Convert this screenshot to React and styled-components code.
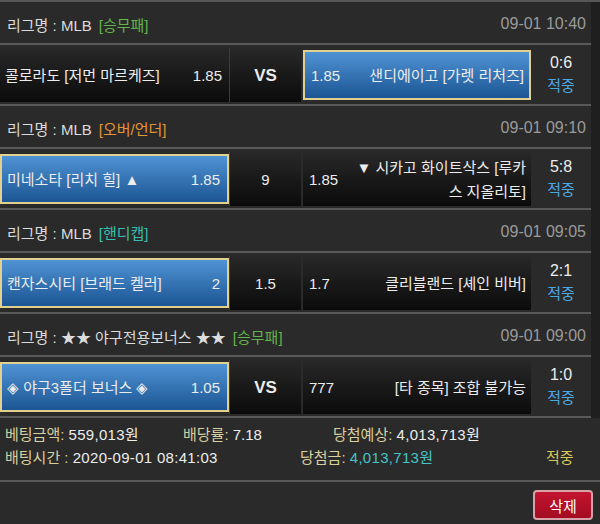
import React from 'react'
import styled, { createGlobalStyle } from 'styled-components'

const GlobalStyle = createGlobalStyle`
  body {
    margin: 0;
    background: #2a2a2a;
    font-family: "Liberation Sans", "Noto Sans CJK KR", sans-serif;
    color: #e6e6e6;
  }
`

const Page = styled.div`
  width: 600px;
  height: 524px;
  display: flex;
  flex-direction: column;
  background: #2a2a2a;
  border-top: 2px solid #575757;
  box-sizing: border-box;
`

const List = styled.div`
  display: flex;
`

const Games = styled.div`
  width: 591px;
  display: flex;
  flex-direction: column;
`

const Rail = styled.div`
  flex: 1;
  background: #1f1f1f;
`

const Header = styled.div`
  height: 38px;
  display: flex;
  align-items: center;
  justify-content: space-between;
  padding: 3px 5px 0 7px;
  font-size: 15px;
  border-bottom: 2px solid #595959;
`

const League = styled.span`
  color: #dcdcdc;
`

const Kind = styled.span`
  margin-left: 7px;
  color: ${p => p.$color};
`

const Time = styled.span`
  color: #9a9a9a;
  font-size: 16px;
`

const Row = styled.div`
  height: 61px;
  display: flex;
  align-items: stretch;
  padding: 3px 0 2px;
  box-sizing: border-box;
  border-bottom: 2px solid #595959;
`

const Cell = styled.div`
  display: flex;
  align-items: center;
  box-sizing: border-box;
  font-size: 15px;
  line-height: 24px;
  color: #ececec;
  padding-top: 2px;
  background: ${p => p.$on
    ? 'linear-gradient(#4f93d4, #1c5593)'
    : 'linear-gradient(#282828, #0b0b0b)'};
  border: ${p => p.$on ? '2px solid #e4d08e' : 'none'};
  margin: ${p => p.$on ? '2px 0' : '0'};
`

const Home = styled(Cell)`
  width: 229px;
  padding-left: 5px;
  padding-right: 7px;
  justify-content: space-between;
`

const Mid = styled(Cell)`
  width: 72px;
  justify-content: center;
  border-left: 1px solid #3d3d3d;
  font-weight: ${p => p.$bold ? 700 : 400};
  font-size: ${p => p.$bold ? '17px' : '15px'};
`

const Away = styled(Cell)`
  width: 228px;
  margin-left: 2px;
  padding-left: 6px;
  padding-right: 5px;
`

const Odds = styled.span`
  width: 44px;
  flex-shrink: 0;
`

const Name = styled.span`
  flex: 1;
  text-align: right;
  word-break: break-all;
`

const Result = styled.div`
  flex: 1;
  display: flex;
  flex-direction: column;
  align-items: center;
  justify-content: center;
  padding-bottom: 2px;
  font-size: 16px;
  line-height: 23px;
`

const Score = styled.span`
  color: #ececec;
`

const Hit = styled.span`
  color: #4ea6e4;
  font-size: 15px;
`

const Info = styled.div`
  height: 64px;
  padding: 5px 0 0 5px;
  box-sizing: border-box;
  border-bottom: 2px solid #595959;
  font-size: 15px;
  line-height: 23px;
`

const Line = styled.div`
  display: flex;
`

const Item = styled.span`
  width: ${p => p.$w ? `${p.$w}px` : 'auto'};
  flex-shrink: 0;
  color: ${p => p.$color || '#ececec'};
`

const Label = styled.span`
  color: #d8cf9e;
`

const Value = styled.span`
  color: ${p => p.$color || '#ececec'};
  letter-spacing: ${p => p.$wide ? '0.3px' : '0'};
`

const Footer = styled.div`
  flex: 1;
  display: flex;
  justify-content: flex-end;
  align-items: center;
  padding: 4px 7px 0 0;
`

const DeleteButton = styled.button`
  width: 60px;
  height: 30px;
  border: 2px solid #d7a2a8;
  border-radius: 4px;
  background: linear-gradient(#c4142f, #a20c22);
  color: #fff;
  font-family: inherit;
  font-size: 15px;
  padding: 0;
`

const games = [
  {
    kind: '[승무패]', color: '#62b54a', time: '09-01 10:40',
    home: '콜로라도 [저먼 마르케즈]', homeOdds: '1.85', mid: 'VS',
    awayOdds: '1.85', away: '샌디에이고 [가렛 리처즈]', pick: 'away', score: '0:6',
  },
  {
    kind: '[오버/언더]', color: '#e59536', time: '09-01 09:10',
    home: '미네소타 [리치 힐] ▲', homeOdds: '1.85', mid: '9',
    awayOdds: '1.85', away: '▼ 시카고 화이트삭스 [루카스 지올리토]', pick: 'home', score: '5:8',
  },
  {
    kind: '[핸디캡]', color: '#36bfb0', time: '09-01 09:05',
    home: '캔자스시티 [브래드 켈러]', homeOdds: '2', mid: '1.5',
    awayOdds: '1.7', away: '클리블랜드 [셰인 비버]', pick: 'home', score: '2:1',
  },
  {
    league: '★★ 야구전용보너스 ★★', kind: '[승무패]', color: '#62b54a', time: '09-01 09:00',
    home: '◈ 야구3폴더 보너스 ◈', homeOdds: '1.05', mid: 'VS',
    awayOdds: '777', away: '[타 종목] 조합 불가능', pick: 'home', score: '1:0',
  },
]

const Game = ({ g }) => (
  <>
    <Header>
      <span>
        <League>리그명 : {g.league || 'MLB'}</League>
        <Kind $color={g.color}>{g.kind}</Kind>
      </span>
      <Time>{g.time}</Time>
    </Header>
    <Row>
      <Home $on={g.pick === 'home'}>
        <span>{g.home}</span>
        <span>{g.homeOdds}</span>
      </Home>
      <Mid $bold={g.mid === 'VS'}>{g.mid}</Mid>
      <Away $on={g.pick === 'away'}>
        <Odds>{g.awayOdds}</Odds>
        <Name>{g.away}</Name>
      </Away>
      <Result>
        <Score>{g.score}</Score>
        <Hit>적중</Hit>
      </Result>
    </Row>
  </>
)

export default function App() {
  return (
    <>
      <GlobalStyle />
      <Page>
        <List>
          <Games>
            {games.map(g => <Game key={g.time} g={g} />)}
          </Games>
          <Rail />
        </List>
        <Info>
          <Line>
            <Item $w={178}><Label>베팅금액:</Label> <Value $wide>559,013원</Value></Item>
            <Item $w={150}><Label>배당률:</Label> 7.18</Item>
            <Item><Label>당첨예상:</Label> <Value $wide>4,013,713원</Value></Item>
          </Line>
          <Line>
            <Item $w={295}><Label>배팅시간 :</Label> <Value $wide>2020-09-01 08:41:03</Value></Item>
            <Item $w={246}><Label>당첨금:</Label> <Value $color="#45c3c6" $wide>4,013,713원</Value></Item>
            <Item $color="#d6c95a">적중</Item>
          </Line>
        </Info>
        <Footer>
          <DeleteButton>삭제</DeleteButton>
        </Footer>
      </Page>
    </>
  )
}
